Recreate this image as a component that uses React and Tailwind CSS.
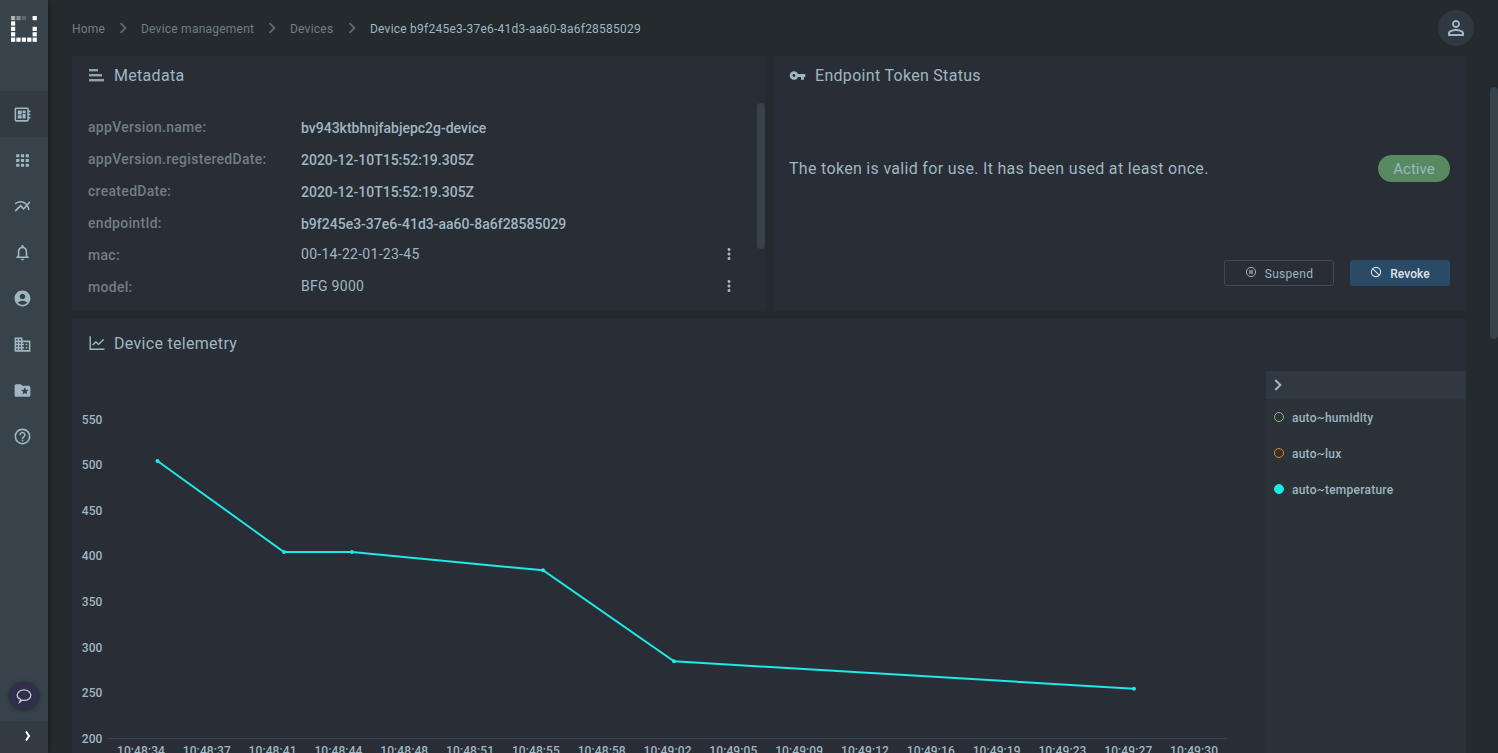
import React from "react";
import {
  MdOutlineDeveloperBoard,
  MdApps,
  MdMultilineChart,
  MdNotificationsNone,
  MdAccountCircle,
  MdDomain,
  MdFolderSpecial,
  MdHelpOutline,
  MdVpnKey,
  MdMoreVert,
  MdPersonOutline,
  MdChevronRight,
} from "react-icons/md";
import { AiOutlineLineChart } from "react-icons/ai";

const nav = [
  MdOutlineDeveloperBoard,
  MdApps,
  MdMultilineChart,
  MdNotificationsNone,
  MdAccountCircle,
  MdDomain,
  MdFolderSpecial,
  MdHelpOutline,
];

const logoDots = [
  [0, 0, 0.6], [1, 0, 0.4], [2, 0, 0.2], [4, 0, 1],
  [0, 1, 1],
  [0, 2, 1], [4, 2, 1],
  [0, 3, 1], [4, 3, 1],
  [0, 4, 1], [1, 4, 1], [2, 4, 1], [3, 4, 1], [4, 4, 1],
];

function Logo() {
  return (
    <svg width="26" height="26" viewBox="0 0 26 26">
      {logoDots.map(([c, r, o]) => (
        <rect
          key={`${c}-${r}`}
          x={c * 5.4}
          y={r * 5.4}
          width="4.2"
          height="4.2"
          fill="#fff"
          fillOpacity={o}
        />
      ))}
    </svg>
  );
}

function Sidebar() {
  return (
    <aside className="z-10 flex h-full w-12 shrink-0 flex-col bg-[#37424a] shadow-[1px_0_5px_rgba(0,0,0,0.35)]">
      <div className="flex h-[91px] items-start pl-[11px] pt-4">
        <Logo />
      </div>
      {nav.map((Icon, i) => (
        <div
          key={i}
          className={
            i === 0
              ? "flex h-[46px] items-center justify-center bg-[#313b41] pr-[3px] text-[#9fb6c3]"
              : "flex h-[46px] items-center justify-center pr-[3px] text-[#9fb6c3]"
          }
        >
          <Icon size={19} />
        </div>
      ))}
      <div className="mt-auto flex flex-col">
        <div className="mb-3 ml-[9px] flex h-[27px] w-[30px] items-center justify-center rounded-full bg-[#302e4a] shadow-[0_1px_5px_rgba(0,0,0,0.35)]">
          <svg width="16" height="16" viewBox="0 0 16 16" fill="none" stroke="#c9c6d0" strokeWidth="1.3">
            <path d="M4.6 11.4C2.6 10.6 1.2 9.1 1.2 7.2C1.2 4.2 4.2 1.9 8 1.9S14.8 4.2 14.8 7.2S11.8 12.4 8 12.4C7.3 12.4 6.7 12.4 6.1 12.2L3.6 14.2Z" />
          </svg>
        </div>
        <div className="flex h-8 items-center justify-center bg-[#313b41] pb-0.5 pl-[7px]">
          <svg width="8" height="10" viewBox="0 0 8 10" fill="none" stroke="#fff" strokeWidth="2">
            <path d="M2 0.5L5 5L2 9.5" />
          </svg>
        </div>
      </div>
    </aside>
  );
}

function Crumb({ children, width }) {
  return (
    <span className={`flex items-center ${width}`}>
      <span className="flex-1 whitespace-nowrap">{children}</span>
      <MdChevronRight size={22} className="mb-px mr-[7px] text-[#5b6a73]" />
    </span>
  );
}

function Header() {
  return (
    <header className="flex h-14 shrink-0 items-center justify-between pl-6 pr-4">
      <nav className="flex items-center pt-px text-xs tracking-[0.23px] text-[#6e7f88]">
        <Crumb width="w-[69px]">Home</Crumb>
        <Crumb width="w-[149px]">Device management</Crumb>
        <Crumb width="w-[80px]">Devices</Crumb>
        <span className="whitespace-nowrap text-[#9fb6c3]">
          Device b9f245e3-37e6-41d3-aa60-8a6f28585029
        </span>
      </nav>
      <div className="flex size-9 items-center justify-center rounded-full bg-[#303842] text-[#9fb6c3]">
        <MdPersonOutline size={24} />
      </div>
    </header>
  );
}

const metadata = [
  { key: "appVersion.name:", value: "bv943ktbhnjfabjepc2g-device" },
  { key: "appVersion.registeredDate:", value: "2020-12-10T15:52:19.305Z" },
  { key: "createdDate:", value: "2020-12-10T15:52:19.305Z" },
  { key: "endpointId:", value: "b9f245e3-37e6-41d3-aa60-8a6f28585029" },
  { key: "mac:", value: "00-14-22-01-23-45", editable: true },
  { key: "model:", value: "BFG 9000", editable: true },
];

function MetadataCard() {
  return (
    <section className="flex h-[255px] w-[693px] flex-col bg-[#292d35]">
      <div className="flex h-[39px] items-center gap-[10px] pl-[17px] text-base tracking-[0.3px] text-[#9fb6c3]">
        <svg width="15" height="13" viewBox="0 0 15 13" fill="#8ea4af">
          <rect width="9" height="2.4" y="0" />
          <rect width="13" height="2.4" y="5" />
          <rect width="15" height="2.4" y="10" />
        </svg>
        <h2>Metadata</h2>
      </div>
      <div className="mt-2 flex flex-1 justify-between">
        <div className="flex-1 pl-4 pt-2 text-sm">
          {metadata.map((m) => (
            <div key={m.key} className="flex h-8 items-center">
              <span className="w-[213px] pb-px font-medium tracking-[0.3px] text-[#6e7f88]">{m.key}</span>
              {m.editable ? (
                <>
                  <span className="flex-1 pb-[3px] tracking-[0.28px] text-[#9fb6c3]">{m.value}</span>
                  <MdMoreVert size={18} className="mb-[2px] mr-[19px] text-[#9fb6c3]" />
                </>
              ) : (
                <span className="pt-px font-medium text-[#9fb6c3]">{m.value}</span>
              )}
            </div>
          ))}
        </div>
        <div className="h-[146px] w-2 rounded-sm bg-[#37424a]" />
      </div>
    </section>
  );
}

function TokenCard() {
  return (
    <section className="flex h-[255px] w-[693px] flex-col bg-[#292d35] text-[#9fb6c3]">
      <div className="flex h-[39px] items-center gap-[9px] pl-4 text-base tracking-[0.3px]">
        <MdVpnKey size={17} />
        <h2>Endpoint Token Status</h2>
      </div>
      <div className="mt-[60px] flex h-[27px] items-center justify-between px-4 text-base">
        <p className="tracking-[0.31px]">The token is valid for use. It has been used at least once.</p>
        <span className="flex h-[27px] w-[72px] items-center justify-center rounded-full bg-[#588a62] pt-px text-[15px]">
          Active
        </span>
      </div>
      <div className="mt-[78px] flex justify-end gap-4 pr-4 text-xs">
        <button className="flex h-[26px] w-[110px] items-center justify-center gap-2 rounded-[3px] border border-[#414b53] tracking-[0.3px]">
          <svg width="12" height="12" viewBox="0 0 12 12" fill="none" className="mb-[3px]">
            <circle cx="6" cy="6" r="4.6" stroke="#9fb6c3" />
            <rect x="4" y="4" width="4" height="4" fill="#72848e" />
          </svg>
          <span className="pt-0.5">Suspend</span>
        </button>
        <button className="flex h-[26px] w-[100px] items-center justify-center gap-2 rounded-[3px] bg-[#2a4a66] font-medium tracking-[0.1px] text-[#dbe5ea]">
          <svg width="12" height="12" viewBox="0 0 12 12" fill="none" stroke="currentColor" strokeWidth="1.1" className="mb-[3px]">
            <circle cx="6" cy="6" r="4.6" />
            <path d="M2.8 2.8L9.2 9.2" />
          </svg>
          <span className="pt-0.5">Revoke</span>
        </button>
      </div>
    </section>
  );
}

const yTicks = [550, 500, 450, 400, 350, 300, 250, 200];
const xTicks = [
  "10:48:34", "10:48:37", "10:48:41", "10:48:44", "10:48:48", "10:48:51",
  "10:48:55", "10:48:58", "10:49:02", "10:49:05", "10:49:09", "10:49:12",
  "10:49:16", "10:49:19", "10:49:23", "10:49:27", "10:49:30",
];
const points = [
  [85.5, 94], [212, 185], [280, 185], [471, 203.3], [602, 294.3], [1062, 321.7],
];

function Chart() {
  return (
    <svg width="1194" height="386" className="shrink-0" fontSize="12" fontWeight="500" fill="#9fb6c3">
      {yTicks.map((t, i) => (
        <text key={t} x="30.6" y={56.7 + i * 45.57} textAnchor="end" letterSpacing="0.15">{t}</text>
      ))}
      <path d="M36 371.5H1155" stroke="#37474f" />
      {xTicks.map((t, i) => (
        <text key={t} x={69 + i * 65.82} y="388" textAnchor="middle" letterSpacing="0.1">{t}</text>
      ))}
      <polyline points={points.map((p) => p.join(",")).join(" ")} fill="none" stroke="#1de9e9" strokeWidth="2" />
      {points.map(([x, y]) => (
        <circle key={x} cx={x} cy={y} r="2" fill="#1de9e9" />
      ))}
    </svg>
  );
}

const series = [
  { name: "auto~humidity", dot: "border-[#7cb874]" },
  { name: "auto~lux", dot: "border-[#ee8322]" },
  { name: "auto~temperature", dot: "border-[#1de9e9] bg-[#1de9e9]" },
];

function TelemetryCard() {
  return (
    <section className="flex h-[434px] w-[1394px] flex-col bg-[#292d35] text-[#9fb6c3]">
      <div className="flex h-12 shrink-0 items-center gap-[7px] pl-[15px] text-base tracking-[0.3px]">
        <AiOutlineLineChart size={20} />
        <h2 className="pt-0.5">Device telemetry</h2>
      </div>
      <div className="flex flex-1">
        <Chart />
        <div className="mt-1 flex flex-1 flex-col bg-[#2c3338]">
          <div className="flex h-7 items-center bg-[#303842] pl-2">
            <svg width="8" height="12" viewBox="0 0 8 12" fill="none" stroke="currentColor" strokeWidth="2">
              <path d="M1.3 1L6.3 6L1.3 11" />
            </svg>
          </div>
          {series.map((s) => (
            <div key={s.name} className="flex h-9 items-center gap-2 pl-2 text-xs font-medium tracking-[0.24px]">
              <span className={`size-[10px] rounded-full border ${s.dot}`} />
              <span className="pt-0.5">{s.name}</span>
            </div>
          ))}
        </div>
      </div>
    </section>
  );
}

export default function App() {
  return (
    <div className="flex h-[753px] w-[1498px] overflow-hidden bg-[#242a2d] font-[Roboto,sans-serif]">
      <Sidebar />
      <main className="flex w-[1442px] flex-col">
        <Header />
        <div className="flex flex-col gap-2 pl-6">
          <div className="flex gap-2">
            <MetadataCard />
            <TokenCard />
          </div>
          <TelemetryCard />
        </div>
      </main>
      <div className="mt-[87px] h-[252px] w-2 rounded-sm bg-[#37424a]" />
    </div>
  );
}
